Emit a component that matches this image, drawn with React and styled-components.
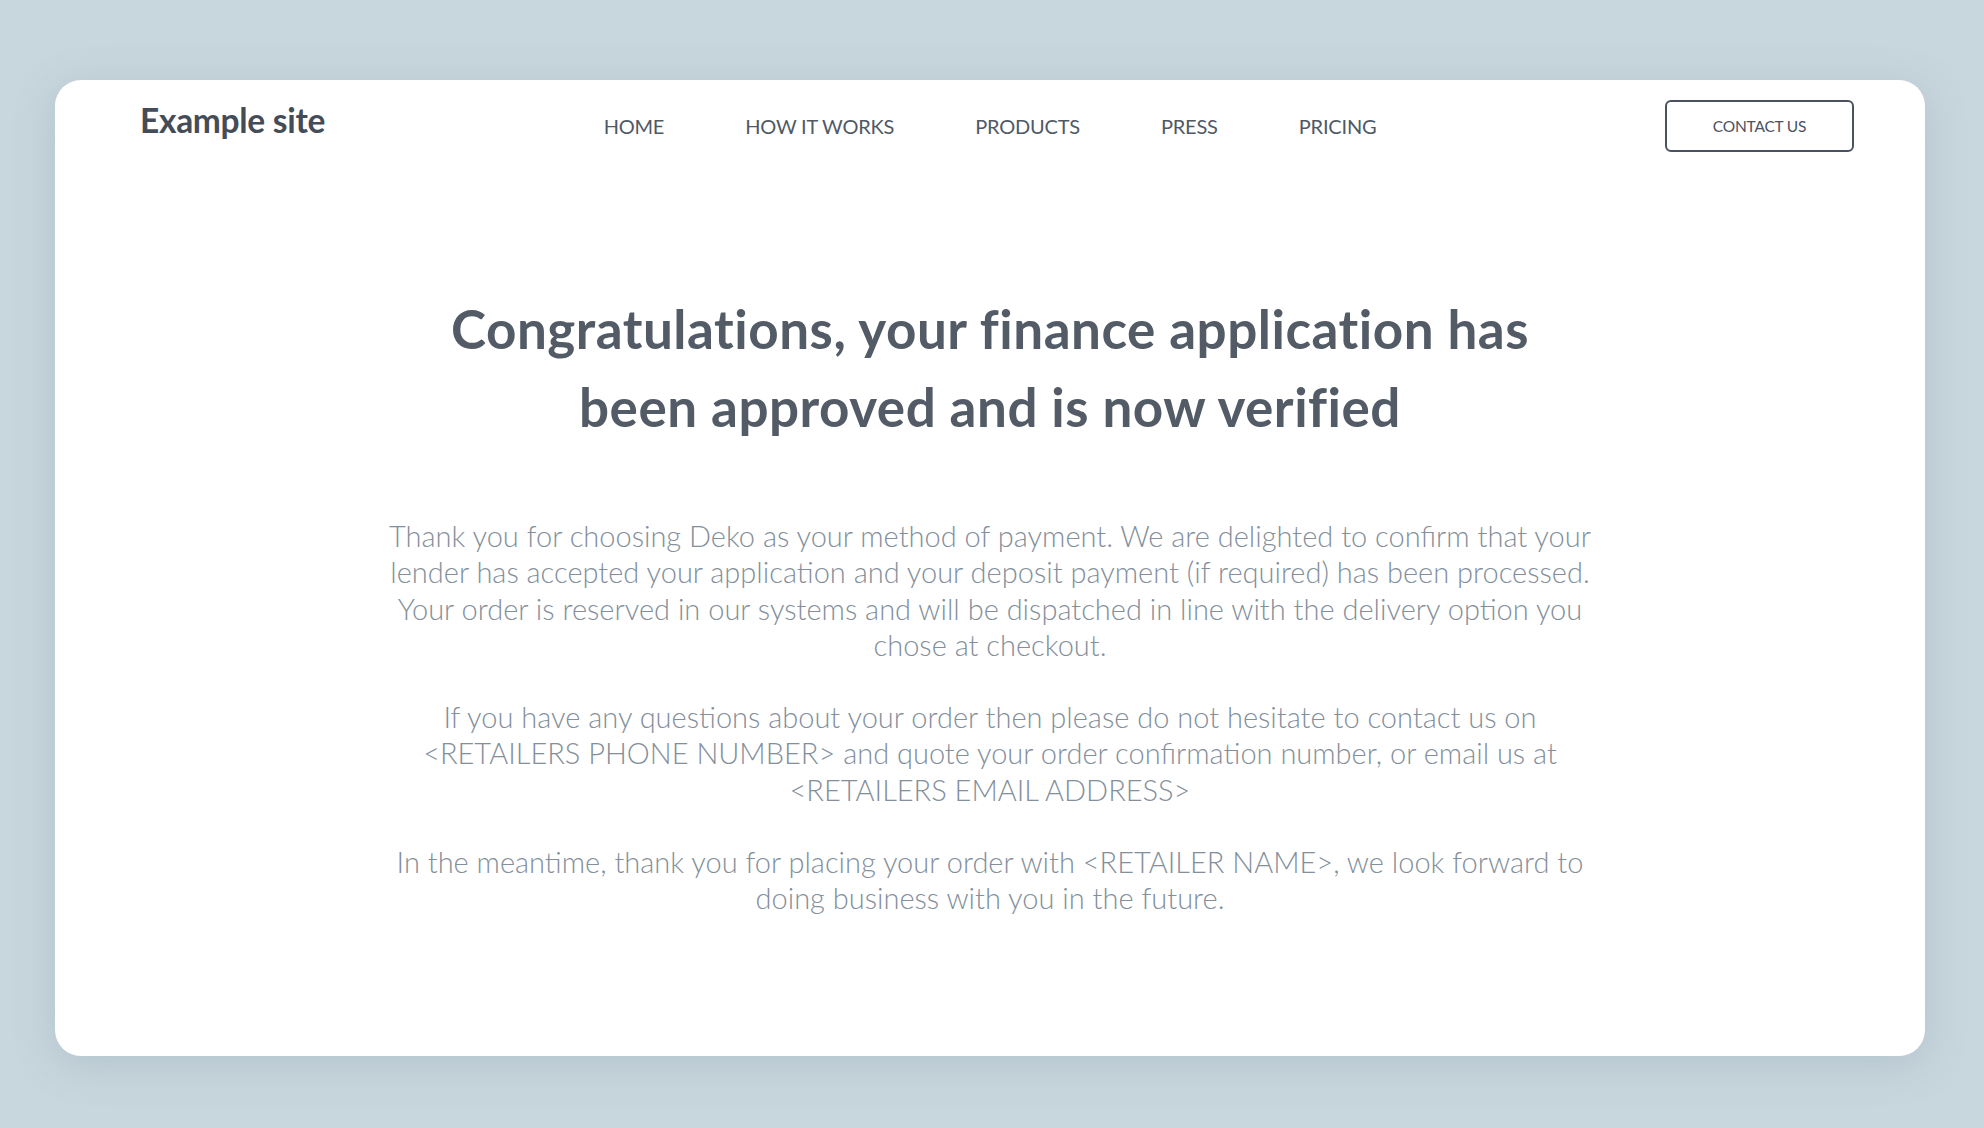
import React from "react";
import styled, { createGlobalStyle } from "styled-components";

const GlobalStyle = createGlobalStyle`
  body {
    margin: 0;
    background: #c8d6dd;
    font-family: "Lato", "Liberation Sans", sans-serif;
  }
`;

const Page = styled.div`
  width: 1984px;
  height: 1128px;
  padding: 80px 59px 72px 55px;
  box-sizing: border-box;
`;

const Card = styled.div`
  height: 976px;
  background: #ffffff;
  border-radius: 26px;
  box-shadow: 0 8px 40px rgba(120, 145, 160, 0.25);
  padding: 20px 71px 0 85px;
  box-sizing: border-box;
`;

const Header = styled.header`
  display: grid;
  grid-template-columns: 1fr auto 1fr;
  align-items: center;
  height: 52px;
`;

const Logo = styled.div`
  font-size: 33.5px;
  font-weight: 700;
  color: #444c58;
  letter-spacing: -0.3px;
  margin-top: -12px;
`;

const Nav = styled.nav`
  display: flex;
  gap: 81px;
  margin-left: -14px;
`;

const NavLink = styled.a`
  font-size: 20px;
  color: #4f5966;
  text-decoration: none;
  letter-spacing: -0.2px;
`;

const ContactButton = styled.button`
  justify-self: end;
  width: 189px;
  height: 52px;
  border: 2px solid #4a5260;
  border-radius: 6px;
  background: transparent;
  font-family: inherit;
  font-size: 15.5px;
  color: #4a5260;
  letter-spacing: -0.2px;
`;

const Main = styled.main`
  display: flex;
  flex-direction: column;
  align-items: center;
  text-align: center;
  padding-top: 138px;
  margin-left: -14px;
`;

const Title = styled.h1`
  margin: 0;
  font-size: 53px;
  line-height: 78px;
  font-weight: 700;
  color: #535c66;
  letter-spacing: 0.5px;
`;

const Body = styled.div`
  margin-top: 72px;
  display: flex;
  flex-direction: column;
  gap: 36px;
`;

const Paragraph = styled.p`
  margin: 0;
  font-size: 29px;
  line-height: 36.3px;
  font-weight: 300;
  color: #838f9b;
  white-space: nowrap;
`;

export default function App() {
  return (
    <>
      <GlobalStyle />
      <Page>
        <Card>
          <Header>
            <Logo>Example site</Logo>
            <Nav>
              <NavLink>HOME</NavLink>
              <NavLink>HOW IT WORKS</NavLink>
              <NavLink>PRODUCTS</NavLink>
              <NavLink>PRESS</NavLink>
              <NavLink>PRICING</NavLink>
            </Nav>
            <ContactButton>CONTACT US</ContactButton>
          </Header>
          <Main>
            <Title>
              Congratulations, your finance application has
              <br />
              been approved and is now verified
            </Title>
            <Body>
              <Paragraph>
                Thank you for choosing Deko as your method of payment. We are delighted to confirm that your
                <br />
                lender has accepted your application and your deposit payment (if required) has been processed.
                <br />
                Your order is reserved in our systems and will be dispatched in line with the delivery option you
                <br />
                chose at checkout.
              </Paragraph>
              <Paragraph>
                If you have any questions about your order then please do not hesitate to contact us on
                <br />
                &lt;RETAILERS PHONE NUMBER&gt; and quote your order confirmation number, or email us at
                <br />
                &lt;RETAILERS EMAIL ADDRESS&gt;
              </Paragraph>
              <Paragraph>
                In the meantime, thank you for placing your order with &lt;RETAILER NAME&gt;, we look forward to
                <br />
                doing business with you in the future.
              </Paragraph>
            </Body>
          </Main>
        </Card>
      </Page>
    </>
  );
}
